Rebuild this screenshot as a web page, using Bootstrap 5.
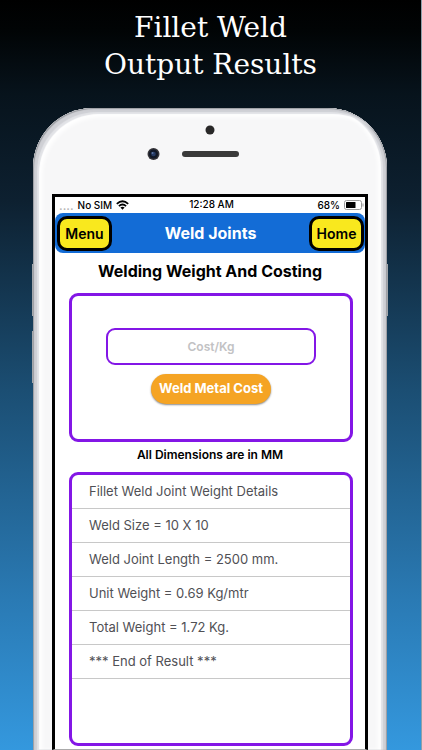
<!DOCTYPE html>
<html lang="en">
<head>
<meta charset="utf-8">
<meta name="viewport" content="width=device-width, initial-scale=1">
<title>Fillet Weld Output Results</title>
<link href="https://cdn.jsdelivr.net/npm/bootstrap@5.3.0/dist/css/bootstrap.min.css" rel="stylesheet">
<style>
body { font-family: Inter, "Liberation Sans", sans-serif; color: #000; }
.stage { background: linear-gradient(#000 0, #010405 30px, #07131c 95px, #0d2030 200px, #1b4e73 390px, #2a7ab4 600px, #3498de 750px); border-right: 1px solid #8fa0aa; }
.headline { font-family: "DejaVu Serif", "Liberation Serif", serif; font-size: 28px; line-height: 37px; color: #fff; padding-top: 9px; margin-bottom: 25px; }
.phone { margin: 0 34px 0 33px; padding: 0 19px; border-radius: 60px 60px 0 0; background: #f7f7f8;
  box-shadow: inset 1px 1px 1px #9a9ca1, inset 4px 4px 1px #cfd0d5, inset 6px 6px 1px #e2e3e7, inset -1px 0 1px #9a9ca1, inset -4px 0 1px #cfd0d5, inset -6px 0 1px #e2e3e7, inset 9px 9px 4px #fff, inset -9px 0 4px #fff; }
.side-key { position: absolute; width: 1px; height: 52px; top: 156px; background: #a4a8ad; }
.side-key.left { left: -1px; }
.side-key.lower { top: 223px; }
.side-key.right { right: -1px; }
.sensors { height: 86px; }
.screen { background: #fff; border: 3px solid #000; border-bottom: 1px solid #aaa; }
.status { height: 16px; font-size: 10px; line-height: 15px; font-weight: 500; display: grid; grid-template-columns: 1fr auto 1fr; padding: 0 1px 0 4px; }
.carrier-dots { color: #b5b5b5; font-size: 12px; }
.titlebar { height: 40px; background: #136cd6; border-radius: 8px; padding: 0 1px 0 2px; }
.titlebar h1 { font-size: 16px; line-height: 20px; font-weight: 700; color: #fff; }
.key-btn { width: 55px; height: 35px; padding: 0; border: 3px solid #000; border-radius: 10px; background: #f9e81e; font-size: 14px; font-weight: 600; color: #000; }
.key-btn:hover { background: #f3df0a; border-color: #000; }
.page-title { font-size: 16px; line-height: 20px; font-weight: 700; padding: 8px 0 12px; }
.panel { border: 3px solid #8316e6; border-radius: 9px; margin: 0 12px 0 14px; }
.cost-form { height: 149px; padding: 32px 34px 0; gap: 9px; }
.cost-input { height: 37px; padding: 0 12px; border: 2px solid #8316e6; border-radius: 9px; font-size: 12px; font-weight: 600; text-align: center; }
.cost-input:focus { border-color: #8316e6; }
.cost-input::placeholder { color: #c2c2c4; }
.cost-btn { width: 120px; height: 30px; padding: 0; border: 0; border-radius: 15px; background: #f5a424; color: #fff; font-size: 13px; font-weight: 700; white-space: nowrap; box-shadow: 0 1px 2px #888; }
.cost-btn:hover { background: #e79413; color: #fff; }
.units { font-size: 12px; line-height: 14px; font-weight: 600; padding: 6px 0 10px; }
.results { min-height: 274px; margin-bottom: 3px; }
.results li { height: 34px; padding: 0 17px; border-bottom: 1px solid #c8c8c8; font-size: 13px; line-height: 33px; color: #505055; white-space: nowrap; }
</style>
<script src="https://cdn.jsdelivr.net/npm/bootstrap@5.3.0/dist/js/bootstrap.bundle.min.js"></script>
</head>
<body>
<div class="stage min-vh-100 d-flex flex-column">
  <h2 class="headline text-center fw-normal">Fillet Weld<br>Output Results</h2>
  <main class="phone position-relative flex-grow-1 d-flex flex-column">
    <span class="side-key left"></span><span class="side-key left lower"></span><span class="side-key right"></span>
    <div class="sensors d-flex justify-content-center">
      <svg width="130" height="86" viewBox="0 0 130 86" aria-hidden="true">
        <circle cx="65" cy="22" r="4.5" fill="#292828"/>
        <circle cx="8.500" cy="46" r="6" fill="#343338"/>
        <circle cx="8.500" cy="46" r="4.500" fill="#111827"/>
        <circle cx="8.500" cy="46" r="2.300" fill="#263a63"/>
        <circle cx="7.500" cy="45" r="1" fill="#5875a5"/>
        <rect x="37" y="43" width="57" height="6" rx="3" fill="#3a3a3a"/>
      </svg>
    </div>
    <div class="screen flex-grow-1">
      <div class="status">
        <div class="d-flex align-items-center gap-1"><span class="carrier-dots">....</span><span>No SIM</span>
          <svg width="13" height="10" viewBox="0 0 13 10" fill="none" stroke="#000" stroke-width="1.800" aria-hidden="true"><path d="M.8 3.800Q6.500-1.400 12.200 3.800M2.900 6.100Q6.500 2.900 10.100 6.100"/><path d="M4.400 7.500Q6.500 5.800 8.600 7.500L6.500 9.700Z" fill="#000" stroke="none"/></svg>
        </div>
        <div>12:28 AM</div>
        <div class="d-flex align-items-center justify-content-end"><span class="me-1">68%</span>
          <svg width="20" height="10" viewBox="0 0 20 10" aria-hidden="true"><rect x=".5" y=".5" width="17" height="9" rx="2" fill="#fff" stroke="#9b9b9b"/><rect x="2" y="2" width="9.500" height="6" rx=".5"/><path d="M19 3.500v3" stroke="#9b9b9b"/></svg>
        </div>
      </div>
      <header class="titlebar d-flex align-items-center justify-content-between">
        <button type="button" class="btn key-btn">Menu</button>
        <h1 class="m-0">Weld Joints</h1>
        <button type="button" class="btn key-btn">Home</button>
      </header>
      <h2 class="page-title text-center m-0">Welding Weight And Costing</h2>
      <form class="panel cost-form d-flex flex-column align-items-center">
        <input id="cost" type="text" class="form-control cost-input" placeholder="Cost/Kg" aria-label="Cost/Kg">
        <button type="button" class="btn cost-btn">Weld Metal Cost</button>
      </form>
      <p class="units text-center m-0">All Dimensions are in MM</p>
      <ul class="panel results list-unstyled">
        <li>Fillet Weld Joint Weight Details</li>
        <li>Weld Size = 10 X 10</li>
        <li>Weld Joint Length = 2500 mm.</li>
        <li>Unit Weight = 0.69 Kg/mtr</li>
        <li>Total Weight = 1.72 Kg.</li>
        <li>*** End of Result ***</li>
      </ul>
    </div>
  </main>
</div>
</body>
</html>
